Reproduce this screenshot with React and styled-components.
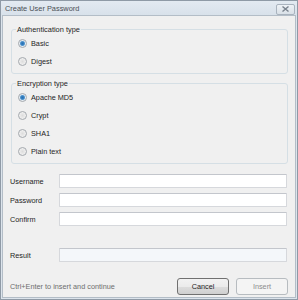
import React from 'react';
import styled, { createGlobalStyle } from 'styled-components';

const GlobalStyle = createGlobalStyle`
    html, body {
        margin: 0;
        padding: 0;
        background: #ffffff;
    }
    * {
        box-sizing: border-box;
    }
`;

export default function App() {
    return (
        <>
            <GlobalStyle />
            <Window>
                <TitleBar>
                    <Title>Create User Password</Title>
                    <CloseButton>
                        <svg width="9" height="6" viewBox="0 0 9 6">
                            <path d="M1.5 0.5 L7.5 5.5 M7.5 0.5 L1.5 5.5" stroke="#7a838e" strokeWidth="1.4" />
                        </svg>
                    </CloseButton>
                </TitleBar>
                <Body>
                    <Group>
                        <Legend>Authentication type</Legend>
                        <Radio label="Basic" checked />
                        <Radio label="Digest" />
                    </Group>
                    <Group $gap>
                        <Legend>Encryption type</Legend>
                        <Radio label="Apache MD5" checked />
                        <Radio label="Crypt" />
                        <Radio label="SHA1" />
                        <Radio label="Plain text" />
                    </Group>
                    <Fields>
                        <FieldRow>
                            <Label>Username</Label>
                            <Input />
                        </FieldRow>
                        <FieldRow>
                            <Label>Password</Label>
                            <Input />
                        </FieldRow>
                        <FieldRow>
                            <Label>Confirm</Label>
                            <Input />
                        </FieldRow>
                    </Fields>
                    <ResultRow>
                        <Label>Result</Label>
                        <Input $disabled />
                    </ResultRow>
                    <Footer>
                        <Hint>Ctrl+Enter to insert and continue</Hint>
                        <Buttons>
                            <Button>Cancel</Button>
                            <Button $disabled>Insert</Button>
                        </Buttons>
                    </Footer>
                </Body>
            </Window>
        </>
    );
}

function Radio({ label, checked }) {
    return (
        <RadioRow>
            <RadioDot $checked={checked} />
            <RadioLabel>{label}</RadioLabel>
        </RadioRow>
    );
}

const Window = styled.div`
    width: 298px;
    height: 300px;
    display: flex;
    flex-direction: column;
    border: 1px solid #8f9aa6;
    background: #dce4ec;
    font-family: "Liberation Sans", Arial, sans-serif;
    font-size: 7.3px;
    color: #1e1e1e;
`;

const TitleBar = styled.div`
    height: 14px;
    display: flex;
    align-items: center;
    justify-content: space-between;
    padding: 0 2px 0 4px;
    background: linear-gradient(#e3eaf1, #d8e1ea);
`;

const Title = styled.div`
    color: #4b4f55;
    font-size: 7.4px;
`;

const CloseButton = styled.div`
    width: 19px;
    height: 11px;
    margin-top: 2px;
    border: 1px solid #a9b3be;
    border-radius: 2px;
    background: linear-gradient(#eef2f6, #d9e0e7);
    display: flex;
    align-items: center;
    justify-content: center;
`;

const Body = styled.div`
    flex: 1;
    display: flex;
    flex-direction: column;
    margin: 0 1px 1px 1px;
    border: 1px solid #b3bdc7;
    background: #f0f0f0;
    padding: 9px 7px 0 7px;
`;

const Group = styled.fieldset`
    margin: ${p => (p.$gap ? '5px' : '0')} 0 0 1px;
    padding: 0 0 3px 6px;
    border: 1px solid #d5dfe5;
    border-radius: 3px;
    display: flex;
    flex-direction: column;
`;

const Legend = styled.legend`
    padding: 0 1px;
    margin-left: -2px;
    line-height: 9px;
    font-size: 7.4px;
    color: #1e1e1e;
`;

const RadioRow = styled.div`
    height: 18px;
    display: flex;
    align-items: center;
    gap: 4px;
`;

const RadioDot = styled.span`
    width: 9px;
    height: 9px;
    border-radius: 50%;
    border: 1px solid #a4a9ae;
    background: ${p =>
        p.$checked
            ? 'radial-gradient(circle, #2a6fb0 0, #3b86c6 1.8px, #9cc3e4 2.6px, #e7eef4 3px)'
            : 'radial-gradient(circle, #dcdcdc 0, #eeeeee 3px)'};
`;

const RadioLabel = styled.span`
    color: #1e1e1e;
`;

const Fields = styled.div`
    margin-top: 10px;
    display: flex;
    flex-direction: column;
    gap: 5px;
`;

const FieldRow = styled.div`
    display: flex;
    align-items: center;
`;

const ResultRow = styled(FieldRow)`
    margin-top: 22px;
`;

const Label = styled.div`
    width: 49px;
    color: #1e1e1e;
`;

const Input = styled.div`
    flex: 1;
    height: 14px;
    margin-right: 1px;
    border: 1px solid #d6d8dc;
    border-top-color: #c3c6cc;
    border-radius: 1px;
    background: ${p => (p.$disabled ? '#f4f7fa' : '#ffffff')};
`;

const Footer = styled.div`
    margin-top: 16px;
    display: flex;
    align-items: center;
    justify-content: space-between;
`;

const Hint = styled.div`
    color: #6e6e6e;
`;

const Buttons = styled.div`
    display: flex;
    gap: 7px;
`;

const Button = styled.div`
    width: 52px;
    height: 17px;
    display: flex;
    align-items: center;
    justify-content: center;
    border-radius: 3px;
    border: 1px solid ${p => (p.$disabled ? '#b7bcc0' : '#707070')};
    background: ${p =>
        p.$disabled
            ? '#f4f4f4'
            : 'linear-gradient(#f2f2f2 0, #ebebeb 50%, #dddddd 51%, #cfcfcf 100%)'};
    color: ${p => (p.$disabled ? '#8d8d8d' : '#1e1e1e')};
`;
